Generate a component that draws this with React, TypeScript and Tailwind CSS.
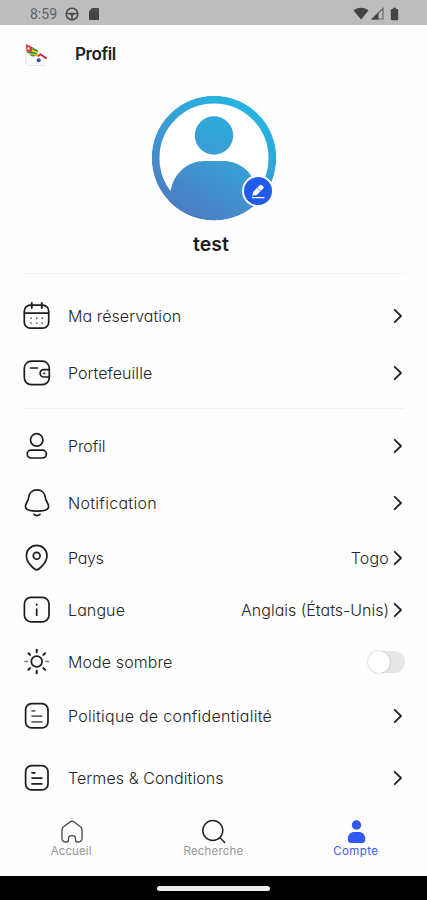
import React, { useState } from "react";

type IconProps = { children: React.ReactNode };

const LineIcon = ({ children }: IconProps) => (
  <svg
    width={28}
    height={28}
    viewBox="0 0 28 28"
    fill="none"
    stroke="#1c1c1c"
    strokeWidth={1.7}
    strokeLinecap="round"
    strokeLinejoin="round"
  >
    {children}
  </svg>
);

const CalendarIcon = () => (
  <LineIcon>
    <rect x="1.3" y="3.2" width="24.4" height="23" rx="6" />
    <path d="M1.5 11.2H25.5" />
    <path d="M8.8 1V6M18.8 1V6" strokeWidth={1.9} />
    <path
      d="M8 16.2h.01M13.7 16.2h.01M19.3 16.2h.01M8 21h.01M13.7 21h.01M19.3 21h.01"
      stroke="#555"
    />
  </LineIcon>
);

const WalletIcon = () => (
  <LineIcon>
    <rect x="1.3" y="2.2" width="25" height="23.4" rx="7" />
    <path d="M7.5 9H14.5" />
    <path d="M26.2 10.6H20.8a3.7 3.7 0 0 0 0 7.4H26.2" />
    <path d="M21 14.3h.6" />
  </LineIcon>
);

const UserIcon = () => (
  <LineIcon>
    <circle cx="13.7" cy="7.9" r="6.2" />
    <rect x="4.2" y="18.2" width="19.2" height="7.8" rx="3.9" />
  </LineIcon>
);

const BellIcon = () => (
  <LineIcon>
    <path d="M14 .9c-4.8 0-8 3.2-8.3 7.4-.2 4-3.3 5.9-3.3 9.2 0 3.3 5.1 4.6 11.6 4.6s11.6-1.3 11.6-4.6c0-3.3-3.1-5.2-3.3-9.2C22 4.1 18.8.9 14 .9Z" />
    <path d="M11 25.3c1.4 1.9 4.6 1.9 6 0" />
  </LineIcon>
);

const PinIcon = () => (
  <LineIcon>
    <path d="M13.7 25.8C11.5 25.8 3.4 18.8 3.4 11.7a10.3 10.3 0 0 1 20.6 0c0 7.1-8.1 14.1-10.3 14.1Z" />
    <circle cx="13.7" cy="11.7" r="3.4" />
  </LineIcon>
);

const InfoIcon = () => (
  <LineIcon>
    <rect x="1.4" y="1.4" width="24.6" height="24.4" rx="6.5" />
    <path d="M13.7 13V19.2" />
    <path d="M13.7 8.6v.1" strokeWidth={2} />
  </LineIcon>
);

const SunIcon = () => (
  <LineIcon>
    <circle cx="13.7" cy="13.5" r="5.4" />
    <path d="M13.7 1.7V4.2M13.7 22.8V25.3M5.4 5.2L7.1 6.9M20.3 20.1L22 21.8M22 5.2L20.3 6.9M7.1 20.1L5.4 21.8" strokeWidth={2} />
    <path d="M2 13.5H4.4M23 13.5H25.4" stroke="#777" />
  </LineIcon>
);

const DocumentIcon = ({ faded }: { faded?: boolean }) => (
  <LineIcon>
    <rect x="2.6" y="1.7" width="22.4" height="24.2" rx="6" />
    <g stroke={faded ? "#666" : "#1c1c1c"}>
      <path d="M9 8.8H11.8M9 14.1H18.8M9 19.8H18.8" />
    </g>
  </LineIcon>
);

const Chevron = () => (
  <svg
    width={10}
    height={16}
    viewBox="0 0 10 16"
    fill="none"
    stroke="#252525"
    strokeWidth={1.8}
    strokeLinecap="round"
    strokeLinejoin="round"
  >
    <path d="M1.7 1.8L8 8L1.7 14.2" />
  </svg>
);

type Item = {
  name: string;
  icon: React.ReactNode;
  height: string;
  tracking: string;
  value?: string;
  valueTracking?: string;
  toggle?: boolean;
};

const bookingItems: Item[] = [
  { name: "Ma réservation", icon: <CalendarIcon />, height: "h-[57px]", tracking: "tracking-[0.05px]" },
  { name: "Portefeuille", icon: <WalletIcon />, height: "h-[57px]", tracking: "tracking-[0.05px]" },
];

const settingItems: Item[] = [
  { name: "Profil", icon: <UserIcon />, height: "h-[57px]", tracking: "tracking-[-0.1px]" },
  { name: "Notification", icon: <BellIcon />, height: "h-[58px]", tracking: "tracking-[0.3px]" },
  {
    name: "Pays",
    icon: <PinIcon />,
    height: "h-[52px]",
    tracking: "tracking-[-0.3px]",
    value: "Togo",
    valueTracking: "tracking-[0.2px]",
  },
  {
    name: "Langue",
    icon: <InfoIcon />,
    height: "h-[52px]",
    tracking: "tracking-[0.1px]",
    value: "Anglais (États-Unis)",
    valueTracking: "tracking-[0px]",
  },
  { name: "Mode sombre", icon: <SunIcon />, height: "h-[52px]", tracking: "tracking-[0.1px]", toggle: true },
  {
    name: "Politique de confidentialité",
    icon: <DocumentIcon faded />,
    height: "h-[56px]",
    tracking: "tracking-[0.27px]",
  },
  { name: "Termes & Conditions", icon: <DocumentIcon />, height: "h-[68px]", tracking: "tracking-[0.08px]" },
];

const StatusBar = () => (
  <div className="flex h-[25px] shrink-0 items-center bg-[#bdbdbd] pt-[2px] pr-[28px] pl-[30px]">
    <span className="w-[28px] font-[Roboto] text-[14px] leading-4 whitespace-nowrap text-[#626262]">8:59</span>
    <svg className="ml-[7px]" width={14} height={14} viewBox="0 0 14 14" fill="none" stroke="#4c4c4c" strokeWidth={1.6}>
      <circle cx="7" cy="7" r="5.8" />
      <path d="M1.2 6.5H12.8M7 7V12.5" />
      <path d="M4.5 7h5L7 9.8Z" fill="#4c4c4c" stroke="none" />
    </svg>
    <svg className="ml-[9px]" width={12} height={14} viewBox="0 0 12 14" fill="#444">
      <path d="M4.2 1H10.2Q11 1 11 1.8V12.2Q11 13 10.2 13H1.8Q1 13 1 12.2V4.3Z" />
      <path d="M4.7 2.3V4.3M6.7 2.3V4.3M8.7 2.3V4.3" stroke="#777" strokeWidth={0.7} />
    </svg>
    <div className="ml-auto flex items-center">
      <svg width={16} height={13} viewBox="0 0 16 13" fill="#444">
        <path d="M.5 3.4C4.7-.1 11.3-.1 15.5 3.4L8 12.5Z" />
      </svg>
      <svg className="ml-[2px]" width={13} height={13} viewBox="0 0 13 13">
        <path d="M12 1.5V12H1.2Z" fill="none" stroke="#666" strokeWidth={1.2} />
        <path d="M7.5 5.8V12.5H.5Z" fill="#444" />
      </svg>
      <svg className="ml-[6px]" width={9} height={14} viewBox="0 0 9 14" fill="#444">
        <path d="M3 .7H6V2H7Q8.2 2 8.2 3.2V12.3Q8.2 13.3 7.2 13.3H1.8Q.8 13.3 .8 12.3V3.2Q.8 2 2 2H3Z" />
      </svg>
    </div>
  </div>
);

// Togolese flag draped over a small house
const Logo = () => (
  <svg width={25} height={25} viewBox="0 0 25 25">
    <path d="M2 13L13 12L20 14L22 22.5H2Z" fill="#faf8f8" />
    <path d="M1.8 1.5V22.5" stroke="#dcdcdc" strokeWidth={0.8} />
    <path d="M2 1L9 4.5L8 9L2.5 8.5Z" fill="#e0303f" />
    <path d="M4.6 3.7l.5 1.1 1.2.1-.9.8.3 1.2-1.1-.6-1.1.6.3-1.2-.9-.8 1.2-.1Z" fill="#fff" />
    <path d="M8.5 5L14 7.5L13.3 13.2L8 13L2.5 9L7.5 9Z" fill="#f0cd2c" />
    <path d="M9 4.7L14 7.3L13.7 8.7L8.5 6.8ZM2.5 8.5L8 8.8L13.4 10.4L13.2 11.6L7.5 10.5L3.5 10ZM5 11.2L9 11.9L13 13L8 13.6Z" fill="#398545" />
    <path d="M13.2 12.8L16.3 10.2L23 14.6L22.2 16.6L16.6 12.6L14 14Z" fill="#c92b36" />
    <circle cx="14.7" cy="17.2" r="2" fill="#344b9c" />
    <path d="M4 22.5H21" stroke="#e2e2e2" strokeWidth={0.8} />
  </svg>
);

const Avatar = () => (
  <div className="relative h-[126px] w-[126px]">
    <svg width={126} height={126} viewBox="0 0 126 126">
      <defs>
        <linearGradient id="avatarFill" x1="30" y1="126" x2="100" y2="12" gradientUnits="userSpaceOnUse">
          <stop offset="0" stopColor="#4e78bf" />
          <stop offset="0.5" stopColor="#3b9bd2" />
          <stop offset="1" stopColor="#25b4e3" />
        </linearGradient>
        <clipPath id="avatarClip">
          <circle cx="63" cy="63" r="62.3" />
        </clipPath>
      </defs>
      <g clipPath="url(#avatarClip)">
        <circle cx="63" cy="63" r="58.4" fill="#fff" stroke="url(#avatarFill)" strokeWidth={7.8} />
        <path d="M19.5 97C22 79 36 66 54 66H72C90 66 104 79 106.5 97L110 126H10Z" fill="url(#avatarFill)" />
        <circle cx="63" cy="40.5" r="19.2" fill="url(#avatarFill)" />
      </g>
    </svg>
    {/* edit badge */}
    <button
      aria-label="edit"
      className="absolute top-[80px] left-[91px] flex h-[32px] w-[32px] items-center justify-center rounded-full border-2 border-white bg-[#205bec]"
    >
      <svg width={16} height={16} viewBox="0 0 16 16">
        <path d="M3.1 9.1L6.8 5.1L10.5 8.3L6.8 11.9L2.3 12.7Z" fill="#fff" />
        <path d="M7.2 4.7L9.6 2.2Q10.7 1.2 11.9 2.2L13.1 3.3Q14.2 4.4 13.2 5.5L10.9 7.9Z" fill="#fff" />
        <path d="M2.5 14.7H14" stroke="#fff" strokeWidth={1.2} strokeLinecap="round" />
      </svg>
    </button>
  </div>
);

const Row = ({ item }: { item: Item }) => {
  const [isOn, setIsOn] = useState(false);

  return (
    <li className={`flex items-center ${item.height}`}>
      {item.icon}
      <span className={`ml-[17px] text-[16px] font-light whitespace-nowrap text-[#252525] ${item.tracking}`}>
        {item.name}
      </span>
      <div className="ml-auto flex items-center">
        {item.value && (
          <span className={`mr-[4px] text-[16px] font-light whitespace-nowrap text-[#252525] ${item.valueTracking}`}>
            {item.value}
          </span>
        )}
        {item.toggle ? (
          <button
            role="switch"
            aria-checked={isOn}
            aria-label={item.name}
            onClick={() => setIsOn(!isOn)}
            className={`flex h-[22px] w-[37px] items-center rounded-full ${
              isOn ? "justify-end bg-[#335ef7]" : "bg-[#e6e6e6]"
            }`}
          >
            <span className="h-[22px] w-[22px] rounded-full bg-white shadow-[0_0_2px_rgba(0,0,0,0.3)]" />
          </button>
        ) : (
          <span className="mr-[2px]">
            <Chevron />
          </span>
        )}
      </div>
    </li>
  );
};

const BottomNav = () => (
  <nav className="grid h-[64px] shrink-0 grid-cols-3 text-[11.5px] leading-[14px] text-[#969696]">
    <a className="flex flex-col items-center pt-[7px]">
      <svg width={26} height={25} viewBox="0 0 26 25" fill="none" stroke="#444" strokeWidth={1.3} strokeLinejoin="round">
        <path d="M4 10.5Q4 8.8 5.5 7.7L12.5 2.6Q14 1.5 15.5 2.6L22.5 7.7Q24 8.8 24 10.5V19Q24 23 20 23H19.5Q17.5 23 17.5 21V19.5Q17.5 16.7 14 16.7T10.5 19.5V21Q10.5 23 8.5 23H8Q4 23 4 19Z" />
      </svg>
      <span className="tracking-[0.1px]">Accueil</span>
    </a>
    <a className="flex flex-col items-center pt-[7px]">
      <svg width={26} height={25} viewBox="0 0 26 25" fill="none" stroke="#222" strokeWidth={1.5} strokeLinecap="round">
        <circle cx="12.8" cy="11.5" r="10" />
        <path d="M20.2 19L24.7 23.5" />
      </svg>
      <span className="tracking-[0.2px]">Recherche</span>
    </a>
    <a className="flex flex-col items-center pt-[7px] text-[#3d5bf5]">
      <svg width={26} height={25} viewBox="0 0 26 25" fill="#3157f4">
        <circle cx="13.5" cy="6" r="4.7" />
        <path d="M4.8 20C4.8 15.5 7.8 13 11.3 13H15.8C19.3 13 22.3 15.5 22.3 20Q22.3 24 19.3 24H7.8Q4.8 24 4.8 20Z" />
      </svg>
      <span className="tracking-[0.4px]">Compte</span>
    </a>
  </nav>
);

const App = () => {
  return (
    <div className="flex h-[900px] w-[427px] flex-col overflow-hidden bg-[#fefefe] font-[Inter,sans-serif] [font-feature-settings:'cv11']">
      <StatusBar />

      {/* header */}
      <header className="flex h-[60px] shrink-0 items-center pl-[24px]">
        <Logo />
        <h1 className="ml-[26px] text-[17px] font-semibold tracking-[-0.4px] text-[#202020]">Profil</h1>
      </header>

      {/* avatar and name */}
      <section className="flex h-[188px] shrink-0 flex-col items-center pt-[10px]">
        <Avatar />
        <h2 className="mt-[9px] mr-[5px] text-[19.5px] leading-7 font-semibold text-[#1c1c1c]">test</h2>
      </section>

      <ul className="mr-[22px] ml-[23px] flex h-[135px] shrink-0 flex-col border-t border-[#f3f3f3] pt-[13px]">
        {bookingItems.map((item) => (
          <Row key={item.name} item={item} />
        ))}
      </ul>

      <ul className="mr-[22px] ml-[23px] flex h-[404px] shrink-0 flex-col border-t border-[#f3f3f3] pt-[8px]">
        {settingItems.map((item) => (
          <Row key={item.name} item={item} />
        ))}
      </ul>

      <BottomNav />

      {/* system gesture bar */}
      <div className="flex h-[24px] shrink-0 items-center justify-center bg-black">
        <div className="h-[5px] w-[113px] rounded-full bg-[#ededed]" />
      </div>
    </div>
  );
};

export default App;
